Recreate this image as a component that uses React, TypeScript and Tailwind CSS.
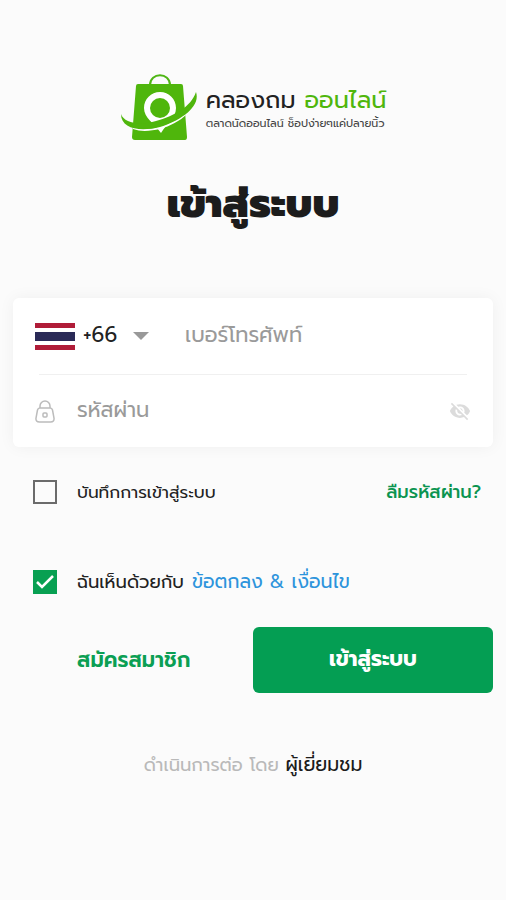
import React, { useState } from 'react';

const Logo: React.FC = () => (
  <svg width="80" height="68" viewBox="0 0 80 68" className="shrink-0" aria-hidden="true">
    <path d="M30 13c0-13 20-13 20 0" fill="none" stroke="#4fb615" strokeWidth="2" />
    <path d="M18 12h43q2 0 2 2l4 51q0 3-2 3H15q-3 0-3-3l4-51q0-2 2-2z" fill="#4fb60c" />
    <path d="M40 20c-9 0-16 7-16 16 0 10 10 15 17 25 6-10 15-15 15-25 0-9-7-16-16-16z" fill="#fff" />
    <circle cx="40" cy="36" r="10" fill="#4fb60c" />
    <path d="M13 54c8 4 18 3 26 1 12-4 22-9 28-16v3c-7 7-17 12-27 15-9 2-19 3-27 0z" fill="#fff" />
    <path d="M1 42c3 9 19 12 35 7C54 44 71 35 76 20c5 15-16 29-36 35C20 60 1 57 1 42z" fill="#4fb60c" />
  </svg>
);

const ThaiFlag: React.FC = () => (
  <svg width="40" height="27" viewBox="0 0 40 27" className="shrink-0" aria-hidden="true">
    <path fill="#fff" d="M0 0h40v27H0z" />
    <path fill="#b01c38" d="M0 0h40v5H0zM0 22h40v5H0z" />
    <path fill="#2a2a57" d="M0 9h40v9H0z" />
  </svg>
);

const LockIcon: React.FC = () => (
  <svg width="20" height="24" viewBox="0 0 20 24" fill="none" stroke="#bcbcbc" strokeWidth="1.5" className="shrink-0" aria-hidden="true">
    <path d="M5 9V7a5 5 0 0 1 10 0v2" />
    <path d="M5 9h10q2 0 2.500 2l1.500 8q.5 4-3.500 4h-11Q.5 23 1 19l1.500-8Q3 9 5 9z" />
    <rect x="8" y="14" width="4" height="4" rx="1" />
  </svg>
);

const EyeOffIcon: React.FC = () => (
  <svg width="22" height="22" viewBox="0 0 24 24" fill="#dcdcdc" aria-hidden="true">
    <path d="M12 7c2.760 0 5 2.240 5 5 0 .65-.13 1.260-.36 1.830l2.920 2.920c1.510-1.260 2.700-2.890 3.430-4.750-1.730-4.390-6-7.500-11-7.500-1.400 0-2.740.25-3.980.7l2.160 2.160C10.740 7.130 11.350 7 12 7zM2 4.270l2.280 2.280.46.46C3.080 8.300 1.780 10.020 1 12c1.730 4.390 6 7.500 11 7.500 1.550 0 3.030-.3 4.380-.84l.42.42L19.730 22 21 20.730 3.270 3 2 4.270zM7.530 9.800l1.550 1.550c-.05.21-.08.43-.08.65 0 1.660 1.340 3 3 3 .22 0 .44-.03.65-.08l1.550 1.550c-.67.33-1.410.53-2.200.53-2.760 0-5-2.240-5-5 0-.79.2-1.530.53-2.200zm4.310-.78 3.150 3.150.02-.16c0-1.660-1.340-3-3-3l-.17.01z" />
  </svg>
);

interface CheckboxProps {
  id: string;
  checked: boolean;
  onChange: (checked: boolean) => void;
}

const Checkbox: React.FC<CheckboxProps> = ({ id, checked, onChange }) => (
  <span className="grid shrink-0">
    <input
      id={id}
      type="checkbox"
      checked={checked}
      onChange={(e) => onChange(e.target.checked)}
      className="peer col-start-1 row-start-1 w-6 h-6 appearance-none border-2 border-[#6b6b6b] checked:border-[#08a052] checked:bg-[#08a052]"
    />
    <svg
      viewBox="0 0 24 24"
      className="col-start-1 row-start-1 w-6 h-6 pointer-events-none invisible peer-checked:visible"
      fill="none"
      stroke="#fff"
      strokeWidth="2.500"
      aria-hidden="true"
    >
      <path d="M4 12l5 5L20 6" />
    </svg>
  </span>
);

export default function App() {
  const [remember, setRemember] = useState(false);
  const [agree, setAgree] = useState(true);
  const [showPassword, setShowPassword] = useState(false);

  return (
    <main className="min-h-screen bg-[#fbfbfb] px-[13px] pt-18 pb-8 font-['Prompt','Kanit','Noto_Sans_Thai','Noto_Sans',sans-serif] text-[#222]">
      <header className="flex flex-col items-center">
        <div className="flex items-center gap-[6px]">
          <Logo />
          <div className="pt-1 whitespace-nowrap">
            <p className="text-2xl leading-8 text-[#222]">
              คลองถม <span className="text-[#4fb60c]">ออนไลน์</span>
            </p>
            <p className="text-[11px] leading-4 text-[#444]">ตลาดนัดออนไลน์ ช็อปง่ายๆแค่ปลายนิ้ว</p>
          </div>
        </div>
        <h1 className="mt-10 text-[40px] leading-12 font-black text-[#1c1c1c]">เข้าสู่ระบบ</h1>
      </header>

      <form onSubmit={(e) => e.preventDefault()}>
        <div className="mt-[70px] rounded-md bg-white px-[22px] shadow-[0_0_16px_rgba(0,0,0,0.05)]">
          <div className="flex h-19 items-center">
            <ThaiFlag />
            <div className="ml-2 grid w-[66px] shrink-0 items-center">
              <select aria-label="รหัสประเทศ" className="col-start-1 row-start-1 w-full appearance-none bg-transparent text-[21px] text-[#222]">
                <option>+66</option>
              </select>
              <svg width="16" height="8" viewBox="0 0 16 8" className="col-start-1 row-start-1 justify-self-end pointer-events-none" aria-hidden="true">
                <path d="M0 0h16L8 8z" fill="#999" />
              </svg>
            </div>
            <input
              type="tel"
              aria-label="เบอร์โทรศัพท์"
              placeholder="เบอร์โทรศัพท์"
              className="ml-9 min-w-0 flex-1 text-[21px] outline-none placeholder:text-[#9a9a9a]"
            />
          </div>
          <hr className="mx-1 border-[#f0f0f0]" />
          <div className="flex h-18 items-center">
            <LockIcon />
            <input
              type={showPassword ? 'text' : 'password'}
              aria-label="รหัสผ่าน"
              placeholder="รหัสผ่าน"
              className="ml-[22px] min-w-0 flex-1 text-[21px] outline-none placeholder:text-[#9a9a9a]"
            />
            <button type="button" aria-label="แสดงรหัสผ่าน" onClick={() => setShowPassword(!showPassword)}>
              <EyeOffIcon />
            </button>
          </div>
        </div>

        <div className="mt-[33px] flex items-center pr-3 pl-5">
          <Checkbox id="remember" checked={remember} onChange={setRemember} />
          <label htmlFor="remember" className="ml-5 text-[17px] leading-6">บันทึกการเข้าสู่ระบบ</label>
          <a href="#forgot" className="ml-auto text-[18px] leading-6 font-medium text-[#0b9450]">ลืมรหัสผ่าน?</a>
        </div>

        <div className="mt-[66px] flex items-center px-5">
          <Checkbox id="agree" checked={agree} onChange={setAgree} />
          <label htmlFor="agree" className="ml-5 text-[18px] leading-6">ฉันเห็นด้วยกับ</label>
          <a href="#terms" className="ml-2 text-[19px] leading-6 text-[#2d94dc]">ข้อตกลง &amp; เงื่อนไข</a>
        </div>

        <div className="mt-[33px] grid grid-cols-2 items-center">
          <a href="#register" className="pl-16 text-[21px] leading-6 font-semibold text-[#0b9f54]">สมัครสมาชิก</a>
          <button type="submit" className="h-[66px] rounded-md bg-[#049e53] text-[21px] font-bold text-white">เข้าสู่ระบบ</button>
        </div>
      </form>

      <p className="mt-15 text-center text-[18px] leading-6 text-[#b9b9b9]">
        ดำเนินการต่อ โดย <a href="#guest" className="text-[19px] text-[#1c1c1c]">ผู้เยี่ยมชม</a>
      </p>
    </main>
  );
}
